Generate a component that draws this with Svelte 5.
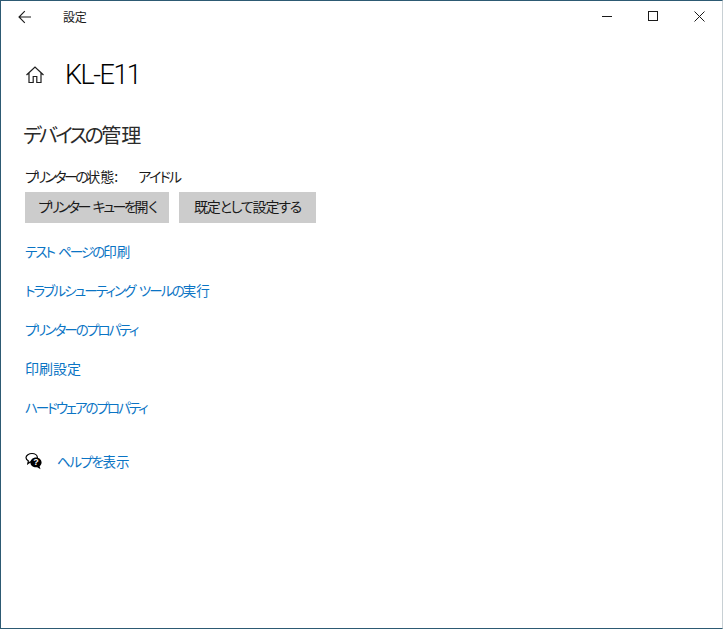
<script lang="ts">
  // letter-spacing per row: the kana in the original UI font run much narrower than Noto's,
  // so only the kana part gets tracked and the kanji tail stays at full width
  const links = [
    { label: 'テスト ページの', tail: '印刷', track: -1.95 },
    { label: 'トラブルシューティング ツールの', tail: '実行', track: -1.84 },
    { label: 'プリンターのプロパティ', tail: '', track: -1.95 },
    { label: '', tail: '印刷設定', track: 0, wide: true },
    { label: 'ハードウェアのプロパティ', tail: '', track: -2.03 }
  ];
</script>

<div class="window">
  <header class="titlebar">
    <button type="button" class="back" aria-label="戻る">
      <svg width="14" height="14" viewBox="0 0 14 14" fill="none" stroke="#1a1a1a" stroke-width="1.1">
        <path d="M13 7H1.2M6.8 1.2 1 7l5.8 5.8" />
      </svg>
    </button>
    <span class="app-name">設定</span>
    <div class="controls">
      <button type="button" aria-label="最小化">
        <svg width="11" height="11" viewBox="0 0 11 11" stroke="#1a1a1a" fill="none"><path d="M0 5.5h10" /></svg>
      </button>
      <button type="button" aria-label="最大化">
        <svg width="11" height="11" viewBox="0 0 11 11" stroke="#1a1a1a" fill="none"><rect x=".5" y=".5" width="9" height="9" /></svg>
      </button>
      <button type="button" aria-label="閉じる">
        <svg width="11" height="11" viewBox="0 0 11 11" stroke="#1a1a1a" fill="none"><path d="M.5.5l10 10M10.5.5l-10 10" /></svg>
      </button>
    </div>
  </header>

  <main class="content">
    <div class="page-title">
      <svg width="20" height="20" viewBox="0 0 20 20" fill="none" stroke="#1f1f1f" stroke-width="1.2">
        <path d="M1.5 10 10 2l8.500 8M4 8v9.500h4.200v-6h3.600v6H16V8" />
      </svg>
      <h1>KL-E11</h1>
    </div>

    <h2>デバイスの<span class="kanji">管理</span></h2>

    <p class="status"><span class="state-label">プリンターの<span class="kanji">状態:</span></span><span class="state-value">アイドル</span></p>
    <div class="buttons">
      <button type="button" class="queue">プリンター キューを<span class="kanji">開</span>く</button>
      <button type="button" class="default">既定として設定する</button>
    </div>

    <nav class="links">
      {#each links as link}
        <a href="#top" class:wide={link.wide} style="letter-spacing: {link.track}px">{link.label}<span class="kanji">{link.tail}</span></a>
      {/each}
    </nav>

    <a class="help" href="#top">
      <svg width="18" height="18" viewBox="0 0 18 18">
        <path d="M7 1.500c3 0 5.400 1.900 5.400 4.300S10 10.100 7 10.100c-.6 0-1.200-.1-1.700-.2L2.800 11.600l.6-2.700C2 8.100 1 7 1 5.800 1 3.400 4 1.500 7 1.500Z" fill="#fff" stroke="#000" stroke-width="1.200" />
        <path d="M11 5.500c3.100 0 5.600 2.200 5.600 4.900 0 1.500-.8 2.900-2 3.800l.9 3-3.300-2c-.4.100-.8.100-1.200.100-3.100 0-5.600-2.200-5.600-4.900S7.900 5.500 11 5.500Z" fill="#000" />
        <text x="11" y="13.200" text-anchor="middle" class="q">?</text>
      </svg>
      <span class="help-label">ヘルプを<span class="kanji">表示</span></span>
    </a>
  </main>
</div>

<style>
  :global(body) {
    margin: 0;
    background: #fff;
  }

  .window {
    box-sizing: border-box;
    width: 723px;
    height: 629px;
    border: 1px solid #2d5a73;
    border-right-color: #c8d0d4;
    background: #fff;
    color: #1a1a1a;
    font-family: "Noto Sans CJK JP", "Noto Sans", sans-serif;
    font-feature-settings: "palt";
    font-size: 13.500px;
    word-spacing: 3px;
    overflow: hidden;
  }

  .kanji {
    letter-spacing: 0;
  }

  .titlebar {
    display: flex;
    align-items: center;
    height: 31px;
  }

  button {
    font: inherit;
    font-feature-settings: inherit;
    word-spacing: inherit;
    color: inherit;
    border: 0;
    background: none;
    padding: 0;
  }

  .back {
    display: flex;
    align-items: center;
    justify-content: center;
    width: 48px;
    height: 31px;
  }

  .app-name {
    margin-left: 14px;
    font-size: 12px;
    letter-spacing: -0.2px;
  }

  .controls {
    display: flex;
    margin-left: auto;
  }

  .controls button {
    display: flex;
    align-items: center;
    justify-content: center;
    width: 46px;
    height: 31px;
  }

  .content {
    padding: 0 24px;
  }

  .page-title {
    display: flex;
    align-items: center;
    gap: 20px;
    margin-top: 22px;
  }

  h1 {
    margin: 0;
    font-family: Roboto, sans-serif;
    font-size: 27px;
    font-weight: 300;
    line-height: 42px;
    letter-spacing: -1.500px;
    color: #000;
  }

  h2 {
    margin: 24px 0 0 -2px;
    font-size: 20px;
    font-weight: 400;
    line-height: 30px;
    letter-spacing: -2.740px;
    color: #2b2b2b;
  }

  .status {
    display: flex;
    gap: 20px;
    margin: 16px 0 0;
    font-size: 14px;
    line-height: 20px;
  }

  .state-label {
    letter-spacing: -2.500px;
  }

  .state-value {
    letter-spacing: -1.650px;
  }

  .buttons {
    display: flex;
    gap: 10px;
    margin-top: 6px;
  }

  .buttons button {
    height: 31px;
    padding-bottom: 4px;
    background: #ccc;
    font-size: 14px;
  }

  .queue {
    width: 144px;
    letter-spacing: -2.450px;
  }

  .buttons .default {
    width: 137px;
    letter-spacing: -1.200px;
  }

  .links {
    display: flex;
    flex-direction: column;
    align-items: flex-start;
    gap: 19px;
    margin-top: 18px;
  }

  a {
    color: #0a74c4;
    text-decoration: none;
    line-height: 20px;
  }

  .links .wide {
    font-size: 14px;
  }

  .help {
    display: flex;
    align-items: center;
    gap: 14px;
    margin-top: 34px;
  }

  .help-label {
    letter-spacing: -1.400px;
  }

  .q {
    fill: #fff;
    font-size: 9px;
    font-weight: 700;
    font-family: "Liberation Sans", sans-serif;
  }
</style>
